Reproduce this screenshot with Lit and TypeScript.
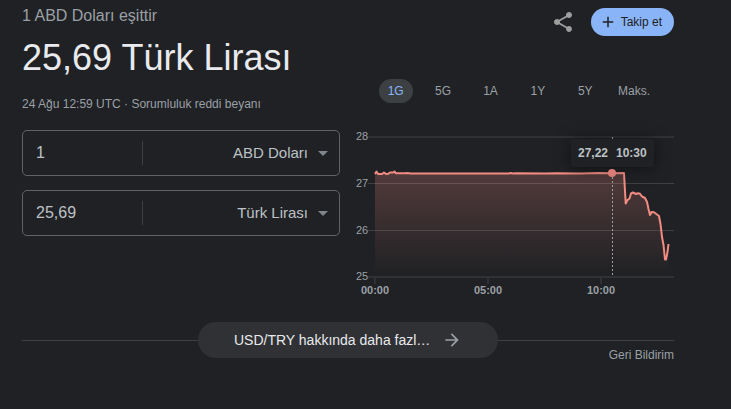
import { LitElement, html, svg, css } from "lit";
import { customElement, state, property } from "lit/decorators.js";
import { classMap } from "lit/directives/class-map.js";

const RANGES = ["1G", "5G", "1A", "1Y", "5Y", "Maks."];
const CURRENCIES = ["ABD Doları", "Türk Lirası"];

const GRID = [
  { label: "28", y: 6, edge: true },
  { label: "27", y: 53, edge: false },
  { label: "26", y: 100, edge: false },
  { label: "25", y: 146, edge: true },
];

const TICKS = [
  { label: "00:00", x: 19 },
  { label: "05:00", x: 132 },
  { label: "10:00", x: 245 },
];

// Exchange rate over the day, in chart units.
const SERIES: [number, number][] = [
  [19, 44], [20.5, 41.5], [22, 44], [26, 44], [28, 42.5], [30, 44], [32, 43.8],
  [34, 42.5], [37, 42.5], [38.5, 41.5], [40, 43.3], [50, 43.3], [51, 43], [55, 43.6],
  [74, 43.6], [76, 43.4], [153, 43.4], [154.5, 43], [157, 43.4], [160, 43.2],
  [190, 43.6], [200, 43.2], [225, 43.5], [242, 43], [256, 43.2],
  [268, 43], [269.7, 73.5], [271.5, 70], [273.5, 68.5], [275, 63.5], [277, 62.5],
  [280, 64], [282, 63.3], [284, 63.8], [286, 66.5], [289, 68], [291, 72],
  [292.5, 79], [294, 85], [295.5, 82], [298, 82.3], [301, 84.5], [303, 86],
  [304.5, 94], [306, 107], [307.5, 115], [309, 129.5], [310, 129.5], [311.5, 122], [312.5, 114],
];

@customElement("rate-chart")
export class RateChart extends LitElement {
  static styles = css`
    :host {
      display: block;
    }
    .chart {
      display: block;
      width: 100%;
      height: auto;
      overflow: visible;
      font-family: "Liberation Sans", Arial, sans-serif;
    }
    .edge {
      fill: #303134;
    }
    .inner {
      fill: #fff;
      fill-opacity: 0.14;
    }
    .axis {
      font-size: 11px;
      fill: #9aa0a6;
    }
    .time {
      font-weight: bold;
      text-anchor: middle;
    }
    .line {
      fill: none;
      stroke: #f28b82;
      stroke-width: 2;
      stroke-linejoin: round;
    }
    .cursor {
      stroke: #9aa0a6;
      stroke-dasharray: 2 2;
    }
    .tip {
      fill: #202124;
      filter: drop-shadow(0 1px 8px rgba(0, 0, 0, 0.5));
    }
    .tip-text {
      font-size: 12px;
      font-weight: bold;
      fill: #bdc1c6;
    }
    .dot {
      fill: #d97d76;
    }
  `;

  render() {
    const line = "M" + SERIES.map((p) => p.join(" ")).join("L");
    return html`
      <svg class="chart" viewBox="0 0 318 168" role="img" aria-label="USD/TRY">
        <defs>
          <linearGradient id="fade" gradientUnits="userSpaceOnUse" x1="0" y1="43" x2="0" y2="144">
            <stop offset="0" stop-color="#f28b82" stop-opacity="0.24" />
            <stop offset="1" stop-color="#f28b82" stop-opacity="0" />
          </linearGradient>
        </defs>
        <path d="${line}V147H19Z" fill="url(#fade)" />
        ${GRID.map(
          (g) => svg`
            <rect class=${g.edge ? "edge" : "inner"} x="12" y=${g.y} width="306" height=${g.edge ? 2 : 1} />
            <text class="axis" x="0" y=${g.y + 4}>${g.label}</text>`
        )}
        ${TICKS.map(
          (t) => svg`
            <rect class="edge" x=${t.x - 1} y="147" width="2" height="7" />
            <text class="axis time" x=${t.x} y="164">${t.label}</text>`
        )}
        <path class="line" d=${line} />
        <path class="cursor" d="M256.5 7V146" />
        <rect class="tip" x="215" y="9" width="83" height="28" rx="2" />
        <text class="tip-text" x="222" y="27">27,22</text>
        <text class="tip-text" x="260" y="27">10:30</text>
        <circle class="dot" cx="256" cy="43" r="4" />
      </svg>
    `;
  }
}

@customElement("currency-field")
export class CurrencyField extends LitElement {
  @property() amount = "";
  @property() currency = "";
  @property() name = "";

  static styles = css`
    :host {
      display: block;
    }
    .field {
      display: flex;
      align-items: center;
      height: 44px;
      border: 1px solid #5f6368;
      border-radius: 5px;
      color: #bdc1c6;
    }
    .amount,
    .unit {
      box-sizing: border-box;
      min-width: 0;
      height: 100%;
      margin: 0;
      border: 0;
      outline: 0;
      background: transparent;
      color: inherit;
      font-family: inherit;
    }
    .amount {
      width: 119px;
      padding: 0 13px;
      font-size: 16px;
    }
    .rule {
      width: 1px;
      height: 24px;
      background: #3c4043;
    }
    .picker {
      display: grid;
      flex: 1;
      height: 100%;
      align-items: center;
    }
    .unit {
      grid-area: 1 / 1;
      width: 100%;
      padding: 0 31px 2px 8px;
      appearance: none;
      font-size: 15px;
      text-align: right;
      text-align-last: right;
    }
    .unit option {
      background: #202124;
    }
    .caret {
      grid-area: 1 / 1;
      justify-self: end;
      margin-right: 11px;
      pointer-events: none;
      fill: #80868b;
    }
  `;

  render() {
    return html`
      <div class="field">
        <input class="amount" type="text" inputmode="decimal" aria-label="${this.name} tutarı" .value=${this.amount} />
        <span class="rule"></span>
        <div class="picker">
          <select class="unit" aria-label="${this.name} para birimi">
            ${CURRENCIES.map((c) => html`<option ?selected=${c === this.currency}>${c}</option>`)}
          </select>
          <svg class="caret" width="10" height="5" viewBox="0 0 10 5" aria-hidden="true"><path d="M0 0h10L5 5z" /></svg>
        </div>
      </div>
    `;
  }
}

@customElement("app-root")
export class AppRoot extends LitElement {
  @state() private range = "1G";

  static styles = css`
    :host {
      display: block;
      box-sizing: border-box;
      min-height: 100vh;
      padding: 6px 57px 24px 22px;
      background: #202124;
      color: #9aa0a6;
      font-family: "Liberation Sans", Arial, sans-serif;
      font-size: 12px;
      line-height: 16px;
    }
    .columns {
      display: grid;
      grid-template-columns: 1fr 1fr;
      gap: 16px;
    }
    .eyebrow {
      font-size: 16px;
      line-height: 20px;
    }
    .title {
      margin: 10px 0 16px;
      color: #e8eaed;
      font-size: 36px;
      font-weight: normal;
      line-height: 44px;
      white-space: nowrap;
    }
    .link {
      color: inherit;
      text-decoration: none;
    }
    .fields {
      display: grid;
      gap: 14px;
      margin-top: 18px;
    }
    .btn {
      margin: 0;
      padding: 0;
      border: 0;
      background: none;
      color: inherit;
      font: inherit;
      cursor: pointer;
    }
    .icon {
      display: block;
      fill: currentColor;
    }
    .actions {
      display: flex;
      justify-content: flex-end;
      align-items: center;
      gap: 16px;
      height: 28px;
      margin-top: 2px;
    }
    .share {
      color: #9e9e9e;
    }
    .follow {
      display: flex;
      align-items: center;
      gap: 4px;
      height: 28px;
      padding: 0 12px 0 8px;
      border-radius: 14px;
      background: #8ab4f8;
      color: #202124;
    }
    .tabs {
      display: grid;
      grid-template-columns: repeat(6, 1fr);
      justify-items: center;
      margin: 43px 15px 27px 16px;
    }
    .tab {
      height: 24px;
      padding: 0 9px;
      border-radius: 12px;
    }
    .tab.active {
      background: #3c4043;
      color: #8ab4f8;
    }
    .footer {
      display: grid;
      grid-template-columns: 1fr 300px 1fr;
      grid-template-rows: 18px auto;
      margin-top: 24px;
    }
    .side {
      grid-row: 2;
      padding-top: 6px;
      border-top: 1px solid #3c4043;
      text-align: right;
    }
    .more {
      display: flex;
      grid-area: 1 / 2 / 3 / 3;
      align-items: center;
      justify-content: space-between;
      box-sizing: border-box;
      height: 36px;
      padding: 0 36px;
      border-radius: 18px;
      background: #303134;
      color: #e8eaed;
      font-size: 14px;
      text-decoration: none;
      white-space: nowrap;
    }
    .arrow {
      color: #9aa0a6;
    }
  `;

  render() {
    return html`
      <main>
        <div class="columns">
          <section>
            <div class="eyebrow">1 ABD Doları eşittir</div>
            <h1 class="title">25,69 Türk Lirası</h1>
            <div>24 Ağu 12:59 UTC · <a class="link" href="#">Sorumluluk reddi beyanı</a></div>
            <div class="fields">
              <currency-field name="Kaynak" amount="1" currency="ABD Doları"></currency-field>
              <currency-field name="Hedef" amount="25,69" currency="Türk Lirası"></currency-field>
            </div>
          </section>
          <section>
            <div class="actions">
              <button class="btn share" aria-label="Paylaş">
                <svg class="icon" width="24" height="24" viewBox="0 0 24 24" aria-hidden="true">
                  <path d="M18 16.08c-.76 0-1.44.3-1.96.77L8.91 12.7c.05-.23.09-.46.09-.7s-.04-.47-.09-.7l7.05-4.11c.54.5 1.25.81 2.04.81 1.66 0 3-1.34 3-3s-1.34-3-3-3-3 1.34-3 3c0 .24.04.47.09.7L8.04 9.81C7.5 9.31 6.79 9 6 9c-1.66 0-3 1.34-3 3s1.34 3 3 3c.79 0 1.5-.31 2.04-.81l7.12 4.16c-.05.21-.08.43-.08.65 0 1.61 1.31 2.92 2.92 2.92s2.92-1.31 2.92-2.92-1.31-2.92-2.92-2.92z" />
                </svg>
              </button>
              <button class="btn follow">
                <svg class="icon" width="18" height="18" viewBox="0 0 24 24" aria-hidden="true">
                  <path d="M19 13h-6v6h-2v-6H5v-2h6V5h2v6h6v2z" />
                </svg>
                Takip et
              </button>
            </div>
            <div class="tabs">
              ${RANGES.map(
                (r) => html`<button
                  class=${classMap({ btn: true, tab: true, active: r === this.range })}
                  aria-pressed=${r === this.range}
                  @click=${() => (this.range = r)}
                >${r}</button>`
              )}
            </div>
            <rate-chart></rate-chart>
          </section>
        </div>
        <div class="footer">
          <div class="side"></div>
          <a class="more" href="#">
            USD/TRY hakkında daha fazl…
            <svg class="icon arrow" width="20" height="20" viewBox="0 0 24 24" aria-hidden="true">
              <path d="M12 4l-1.41 1.41L16.17 11H4v2h12.17l-5.58 5.59L12 20l8-8z" />
            </svg>
          </a>
          <div class="side"><a class="link" href="#">Geri Bildirim</a></div>
        </div>
      </main>
    `;
  }
}
